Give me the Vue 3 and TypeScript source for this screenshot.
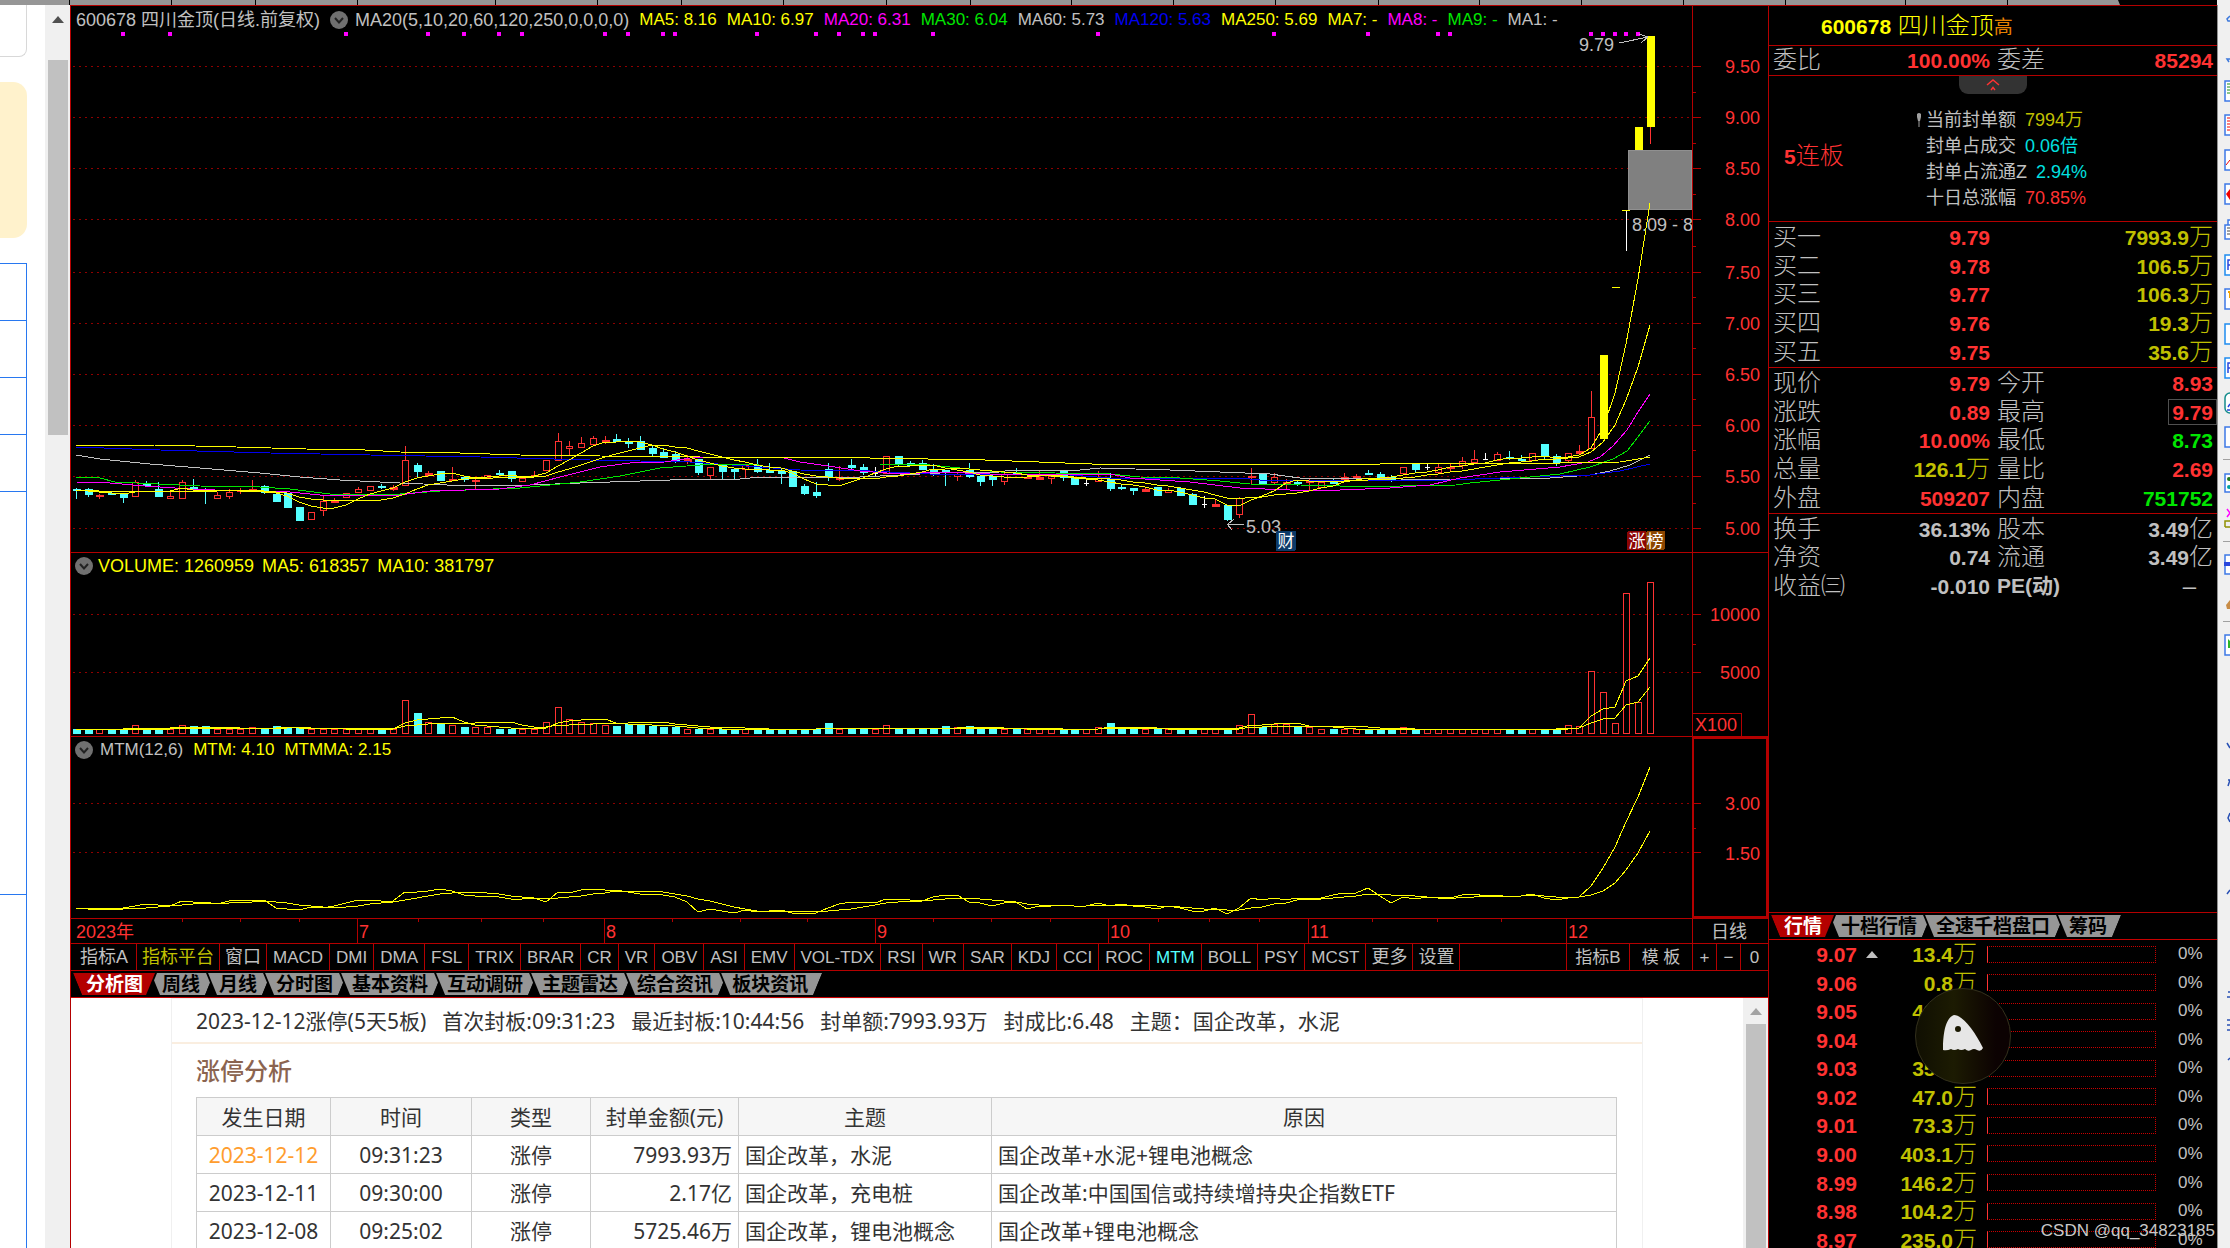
<script setup lang="ts">
type Kind = 'r' | 'c' | 'w' | 'y'
// [kind, high, body top, body bottom, low] in chart pixels
type Candle = [Kind, number, number, number, number]

const X0 = 76
const STEP = 11.745
const xs = (i: number): number => Math.round(X0 + i * STEP)

const candles: Candle[] = [
  ['c', 488, 489, 490, 499], ['c', 488, 489, 494, 497], ['r', 494, 495, 496, 499], ['c', 491, 493, 494, 495],
  ['c', 493, 494, 497, 503], ['r', 480, 482, 497, 497], ['c', 481, 483, 485, 487], ['c', 482, 489, 496, 496],
  ['r', 491, 496, 499, 499], ['r', 480, 482, 499, 499], ['c', 479, 487, 489, 489], ['c', 488, 489, 490, 504],
  ['r', 492, 495, 499, 499], ['r', 489, 492, 497, 499], ['r', 488, 490, 491, 494], ['r', 480, 489, 491, 491],
  ['c', 485, 486, 492, 494], ['c', 492, 494, 501, 501], ['c', 493, 493, 507, 507], ['c', 507, 507, 520, 520],
  ['r', 512, 512, 520, 520], ['r', 495, 501, 511, 516], ['r', 498, 500, 502, 502], ['r', 493, 493, 498, 498],
  ['r', 487, 489, 493, 493], ['r', 486, 486, 491, 491], ['c', 484, 486, 487, 489], ['r', 485, 487, 489, 491],
  ['r', 446, 460, 486, 486], ['c', 463, 465, 471, 477], ['r', 471, 473, 475, 475], ['c', 471, 471, 480, 481],
  ['r', 467, 479, 480, 480], ['c', 476, 477, 479, 482], ['r', 479, 480, 481, 489], ['r', 475, 475, 478, 478],
  ['c', 470, 473, 474, 476], ['c', 471, 471, 478, 482], ['r', 478, 478, 482, 482], ['r', 471, 475, 476, 476],
  ['r', 460, 460, 471, 471], ['r', 433, 441, 461, 461], ['r', 441, 446, 449, 455], ['r', 437, 443, 448, 448],
  ['r', 436, 438, 445, 445], ['r', 436, 440, 441, 444], ['c', 434, 439, 441, 441], ['c', 438, 442, 443, 448],
  ['c', 436, 441, 449, 449], ['c', 446, 448, 453, 457], ['c', 448, 452, 457, 457], ['c', 451, 454, 460, 463],
  ['r', 455, 459, 461, 464], ['c', 459, 459, 472, 475], ['r', 467, 467, 476, 479], ['c', 465, 465, 471, 479],
  ['c', 468, 469, 471, 479], ['r', 465, 465, 470, 479], ['c', 459, 465, 471, 473], ['c', 463, 470, 472, 472],
  ['c', 468, 471, 473, 484], ['c', 471, 471, 486, 486], ['c', 484, 486, 493, 495], ['c', 482, 492, 495, 498],
  ['c', 463, 469, 477, 481], ['r', 466, 478, 479, 481], ['c', 459, 465, 467, 469], ['c', 464, 467, 472, 475],
  ['w', 467, 473, 474, 476], ['r', 456, 456, 474, 474], ['c', 456, 456, 463, 466], ['c', 461, 463, 465, 465],
  ['c', 460, 463, 469, 469], ['c', 464, 469, 471, 476], ['c', 470, 470, 471, 486], ['r', 473, 474, 477, 481],
  ['c', 463, 470, 476, 478], ['c', 476, 476, 481, 486], ['c', 475, 476, 479, 486], ['r', 473, 474, 482, 485],
  ['c', 468, 472, 473, 475], ['r', 476, 477, 478, 479], ['r', 471, 477, 479, 479], ['r', 476, 476, 479, 484],
  ['c', 471, 471, 477, 481], ['c', 478, 478, 484, 484], ['w', 479, 483, 484, 486], ['r', 471, 478, 482, 482],
  ['c', 473, 478, 488, 491], ['c', 484, 487, 488, 490], ['c', 488, 488, 490, 495], ['r', 487, 489, 491, 491],
  ['c', 487, 487, 495, 495], ['r', 488, 490, 493, 493], ['c', 487, 488, 495, 496], ['c', 493, 494, 504, 505],
  ['w', 496, 504, 505, 508], ['r', 500, 504, 506, 506], ['c', 505, 505, 519, 521], ['r', 497, 498, 515, 518],
  ['r', 468, 476, 477, 484], ['c', 473, 474, 483, 484], ['r', 473, 477, 483, 484], ['r', 479, 482, 483, 489],
  ['c', 480, 482, 483, 486], ['r', 478, 480, 482, 491], ['r', 481, 482, 488, 488], ['c', 479, 482, 483, 484],
  ['r', 473, 477, 479, 480], ['r', 474, 476, 477, 479], ['c', 470, 473, 474, 475], ['c', 472, 474, 478, 478],
  ['c', 475, 477, 479, 482], ['r', 467, 467, 474, 474], ['c', 463, 463, 469, 472], ['w', 463, 467, 468, 470],
  ['r', 463, 467, 473, 473], ['r', 463, 467, 468, 471], ['r', 457, 461, 466, 469], ['r', 450, 459, 463, 463],
  ['w', 453, 459, 460, 460], ['r', 452, 454, 461, 461], ['c', 451, 457, 458, 460], ['c', 455, 459, 460, 462],
  ['r', 453, 453, 461, 461], ['c', 444, 444, 456, 459], ['c', 454, 456, 462, 466], ['r', 453, 453, 461, 463],
  ['r', 445, 451, 453, 455], ['r', 391, 417, 449, 449], ['y', 355, 355, 438, 438], ['y', 287, 287, 287, 287],
  ['w', 210, 210, 211, 251], ['y', 127, 127, 150, 150], ['y', 36, 36, 126, 144],
]

const volTops: Record<number, number> = {
  5: 725, 9: 725, 10: 726, 11: 726, 15: 727, 17: 726, 18: 727, 19: 727, 28: 700, 29: 713, 30: 722, 31: 724, 32: 725,
  33: 727, 34: 727, 35: 727, 40: 722, 41: 707, 42: 719, 43: 722, 44: 723, 45: 725, 46: 726, 47: 724, 48: 724, 49: 726,
  50: 727, 51: 727, 64: 723, 69: 725, 74: 726, 75: 727, 76: 726, 87: 727, 88: 723, 99: 725, 100: 714, 101: 727,
  102: 724, 103: 724, 104: 727, 105: 727, 113: 727, 127: 725, 128: 726, 129: 671, 130: 692, 131: 723, 132: 593,
  133: 702, 134: 582,
}
const volumes = candles.map((_, i) => volTops[i] ?? 729)

const close = candles.map(([k, , t, b]) => (k === 'c' ? b : t))

function average(src: number[], n: number): number[] {
  return src.map((_, i) => {
    let sum = 0
    for (let j = 0; j < n; j++) sum += src[Math.max(0, i - j)]
    return sum / n
  })
}
function toLine(ys: number[]): string {
  return ys.map((y, i) => `${xs(i)},${Math.round(y)}`).join(' ')
}

const mtmHead = [908, 909, 909, 909, 908, 906, 904, 905, 906, 901, 902, 902]
const mtm = close.map((c, i) => (i < 12 ? mtmHead[i] : 902 - (close[i - 12] - c) * 0.32))

const priceLines = [
  { color: '#c0c0c0', points: '76,455 100,459 150,464 200,468 260,473 300,477 340,480 400,483 470,486 530,485 580,483 640,481 700,479 740,479 760,477 860,477 940,473 1000,472 1010,470 1080,470 1100,468 1170,470 1220,472 1270,474 1300,478 1350,478 1400,479 1450,480 1500,478 1550,478 1590,475 1610,471 1630,465 1650,455' },
  { color: '#0000f0', points: '76,447 160,450 270,453 370,455 480,457 590,460 690,462 760,467 800,470 870,471 930,474 980,474 1070,475 1110,478 1240,478 1260,480 1350,480 1450,480 1500,478 1590,475 1620,471 1650,464' },
  { color: '#00e600', points: '76,477 100,478 115,482 200,486 260,487 290,489 330,494 400,494 440,491 520,488 580,482 620,476 660,468 700,465 760,464 880,464 920,464 950,467 1000,472 1110,474 1140,477 1180,478 1220,481 1250,484 1300,485 1340,486 1400,486 1456,485 1470,483 1510,479 1560,474 1590,467 1613,459 1627,451 1638,437 1650,421' },
  { color: '#ff00ff', points: '76,482 110,483 145,486 190,489 240,491 290,492 330,496 400,495 430,491 500,489 530,485 560,477 600,467 630,463 665,462 690,458 740,457 780,457 800,462 835,467 860,471 900,474 940,472 990,474 1030,474 1110,474 1130,478 1190,482 1240,488 1290,490 1340,490 1390,488 1430,485 1460,478 1500,472 1560,467 1588,462 1600,457 1613,446 1627,430 1638,412 1650,394' },
  { color: '#ffff00', points: '76,445 154,445 236,447 306,449 365,450 400,452 460,453 520,455 600,456 700,457 870,458 985,460 1092,464 1380,464 1400,463 1560,463 1620,462 1650,457' },
  { color: '#ffff00', points: toLine(average(close, 10)) },
  { color: '#ffff00', points: toLine(average(close, 5)) },
]
const volumeLines = [toLine(average(volumes, 5)), toLine(average(volumes, 10))]
const mtmLines = [toLine(mtm), toLine(average(mtm, 6))]

const markers = [4, 8, 23, 30, 33, 36, 38, 45, 47, 50, 51, 58, 63, 65, 67, 68, 73, 87, 102, 110, 116, 117, 129, 130, 131, 132, 133]

const priceTicks = [
  { y: 66, t: '9.50' }, { y: 117, t: '9.00' }, { y: 168, t: '8.50' }, { y: 219, t: '8.00' }, { y: 272, t: '7.50' },
  { y: 323, t: '7.00' }, { y: 374, t: '6.50' }, { y: 425, t: '6.00' }, { y: 476, t: '5.50' }, { y: 528, t: '5.00' },
]
const priceMinor = [92, 143, 194, 246, 297, 348, 399, 450, 503]

const stroke: Record<Kind, string> = { r: '#ff3232', c: '#54ffff', w: '#fff', y: '#ffff00' }

const legend = [
  { t: 'MA5: 8.16', c: 'yellow' }, { t: 'MA10: 6.97', c: 'yellow' }, { t: 'MA20: 6.31', c: 'magenta' },
  { t: 'MA30: 6.04', c: 'green' }, { t: 'MA60: 5.73', c: 'silver' }, { t: 'MA120: 5.63', c: 'blue' },
  { t: 'MA250: 5.69', c: 'yellow' }, { t: 'MA7: -', c: 'yellow' }, { t: 'MA8: -', c: 'magenta' },
  { t: 'MA9: -', c: 'green' }, { t: 'MA1: -', c: 'silver' },
]

const months = [
  { x: 357, t: '7' }, { x: 604, t: '8' }, { x: 875, t: '9' }, { x: 1108, t: '10' }, { x: 1308, t: '11' }, { x: 1566, t: '12' },
]
const weekTicks = [182, 240, 299, 418, 481, 543, 672, 740, 807, 933, 991, 1050, 1158, 1209, 1259, 1372, 1437, 1501]

const indicators = ['指标A', '指标平台', '窗口', 'MACD', 'DMI', 'DMA', 'FSL', 'TRIX', 'BRAR', 'CR', 'VR', 'OBV', 'ASI', 'EMV', 'VOL-TDX', 'RSI', 'WR', 'SAR', 'KDJ', 'CCI', 'ROC', 'MTM', 'BOLL', 'PSY', 'MCST', '更多', '设置']
const cjkNames = ['指标平台', '窗口', '更多', '设置']
const chartTabs = ['分析图', '周线', '月线', '分时图', '基本资料', '互动调研', '主题雷达', '综合资讯', '板块资讯']
const quoteTabs = ['行情', '十档行情', '全速千档盘口', '筹码']

const summary = ['2023-12-12涨停(5天5板)', '首次封板:09:31:23', '最近封板:10:44:56', '封单额:7993.93万', '封成比:6.48', '主题：国企改革，水泥']
const limitRows = [
  ['2023-12-12', '09:31:23', '涨停', '7993.93万', '国企改革，水泥', '国企改革+水泥+锂电池概念'],
  ['2023-12-11', '09:30:00', '涨停', '2.17亿', '国企改革，充电桩', '国企改革:中国国信或持续增持央企指数ETF'],
  ['2023-12-08', '09:25:02', '涨停', '5725.46万', '国企改革，锂电池概念', '国企改革+锂电池概念'],
]

const bids = [
  ['买一', '9.79', '7993.9', '万'], ['买二', '9.78', '106.5', '万'], ['买三', '9.77', '106.3', '万'],
  ['买四', '9.76', '19.3', '万'], ['买五', '9.75', '35.6', '万'],
]
interface Stat { k: string; v: string; u?: string; c: string; boxed?: boolean }
const stats: Stat[][] = [
  [{ k: '现价', v: '9.79', c: 'red' }, { k: '今开', v: '8.93', c: 'red' }],
  [{ k: '涨跌', v: '0.89', c: 'red' }, { k: '最高', v: '9.79', c: 'red', boxed: true }],
  [{ k: '涨幅', v: '10.00%', c: 'red' }, { k: '最低', v: '8.73', c: 'green' }],
  [{ k: '总量', v: '126.1', u: '万', c: 'olive' }, { k: '量比', v: '2.69', c: 'red' }],
  [{ k: '外盘', v: '509207', c: 'red' }, { k: '内盘', v: '751752', c: 'green' }],
]
const basics: Stat[][] = [
  [{ k: '换手', v: '36.13%', c: 'silver' }, { k: '股本', v: '3.49', u: '亿', c: 'silver' }],
  [{ k: '净资', v: '0.74', c: 'silver' }, { k: '流通', v: '3.49', u: '亿', c: 'silver' }],
  [{ k: '收益㈢', v: '-0.010', c: 'silver' }, { k: 'PE(动)', v: '', u: '–', c: 'silver' }],
]
const sealInfo = [
  { k: '当前封单额', v: '7994万', c: 'olive' }, { k: '封单占成交', v: '0.06倍', c: 'cyan' },
  { k: '封单占流通Z', v: '2.94%', c: 'cyan' }, { k: '十日总涨幅', v: '70.85%', c: 'red' },
]
const depth = [
  ['9.07', '13.4'], ['9.06', '0.8'], ['9.05', '42.6'], ['9.04', '8.1'], ['9.03', '35.0'], ['9.02', '47.0'],
  ['9.01', '73.3'], ['9.00', '403.1'], ['8.99', '146.2'], ['8.98', '104.2'], ['8.97', '235.0'],
]

const stripMarks = [69, 171, 255, 357, 495, 597, 681, 783, 886, 970, 1071, 1173, 1275, 1378, 1479, 1581, 1683, 1785, 1905, 2007]
</script>

<template>
  <div class="app">
    <svg class="strip" viewBox="0 0 2230 5" preserveAspectRatio="xMinYMin slice" aria-hidden="true">
      <rect width="2230" height="5" fill="#000" />
      <path d="M0 0H2118L2120 5H0Z" fill="#969696" />
      <rect v-for="m in stripMarks" :key="m" :x="m" y="0" width="1" height="5" fill="#000" />
      <rect x="2217" width="13" height="5" fill="#f0f0f0" />
    </svg>

    <div class="body">
      <aside class="page-edge">
        <div class="page-cards">
          <div class="card white"></div>
          <div class="card cream"></div>
          <div class="grid-edge">
            <i v-for="n in 4" :key="n" class="cell"></i>
            <i class="cell tall"></i>
            <i class="cell rest"></i>
          </div>
        </div>
        <div class="scroll">
          <svg width="24" height="55" viewBox="0 0 24 55"><path d="M6 18L12 11L18 18Z" fill="#505050" /></svg>
          <div class="thumb"></div>
        </div>
      </aside>

      <main class="chart">
        <section class="panel">
          <header class="legend">
            <span class="silver name">600678 四川金顶(日线.前复权)</span>
            <svg class="drop" viewBox="0 0 18 18"><circle cx="9" cy="9" r="9" fill="#707070" /><path d="M5 7L9 11.500L13 7" fill="none" stroke="#222" stroke-width="2" /></svg>
            <span class="silver formula">MA20(5,10,20,60,120,250,0,0,0,0)</span>
            <span v-for="l in legend" :key="l.t" :class="l.c">{{ l.t }}</span>
          </header>
          <svg class="plot" viewBox="71 6 1697 546" shape-rendering="crispEdges">
            <g v-for="t in priceTicks" :key="t.t">
              <line x1="73" x2="1692" :y1="t.y + 0.5" :y2="t.y + 0.5" class="dots" />
              <line x1="1692" x2="1701" :y1="t.y + 0.5" :y2="t.y + 0.5" class="axis" />
              <text x="1760" :y="t.y + 7" text-anchor="end" class="tick">{{ t.t }}</text>
            </g>
            <line v-for="y in priceMinor" :key="y" x1="1692" x2="1696" :y1="y + 0.5" :y2="y + 0.5" class="axis" />
            <line x1="1692.500" x2="1692.500" y1="6" y2="552" class="axis" />
            <rect v-for="m in markers" :key="m" :x="xs(m) - 2" y="32" width="4" height="4" fill="#ff00ff" />
            <g v-for="(c, i) in candles" :key="i">
              <rect :x="xs(i)" :y="c[1]" width="1" :height="c[4] - c[1]" :fill="i === 134 ? '#ff3232' : stroke[c[0]]" />
              <rect v-if="c[0] === 'w'" :x="xs(i) - 2" :y="c[2]" width="5" height="1" fill="#fff" />
              <rect v-else-if="c[0] === 'r' && c[3] - c[2] > 2" :x="xs(i) - 2.5" :y="c[2] + 0.5" width="6" :height="c[3] - c[2] - 1" fill="#000" :stroke="stroke.r" />
              <rect v-else :x="xs(i) - 3" :y="c[2]" width="8" :height="c[3] - c[2] + 1" :fill="stroke[c[0]]" />
            </g>
            <rect x="1628.500" y="150.500" width="63" height="59" fill="#808080" stroke="#909090" />
            <rect x="1622" y="210" width="8" height="1" fill="#ffff00" />
            <polyline v-for="(l, i) in priceLines" :key="i" :points="l.points" :stroke="l.color" class="curve" />
            <path d="M1227.500 524.500H1244M1227.500 524.500L1234 519M1227.500 524.500L1232 530" class="arrow" />
            <path d="M1619 43L1648 37M1648 37L1639 34M1648 37L1641 43" class="arrow" />
            <text x="1246" y="533" class="note">5.03</text>
            <text x="1579" y="51" class="note">9.79</text>
            <svg x="1630" y="210" width="62" height="26"><text x="2" y="21" class="note">8.09 - 8</text></svg>
            <rect x="1276" y="531" width="20" height="20" rx="2" fill="#0c3a68" />
            <text x="1286" y="547" class="badge">财</text>
            <rect x="1627" y="531" width="19" height="19" rx="2" fill="#8c0404" />
            <text x="1637" y="547" class="badge">涨</text>
            <rect x="1646" y="531" width="19" height="19" rx="2" fill="#8c4600" />
            <text x="1655" y="547" class="badge">榜</text>
          </svg>
        </section>

        <section class="panel">
          <header class="legend low">
            <svg class="drop" viewBox="0 0 18 18"><circle cx="9" cy="9" r="9" fill="#707070" /><path d="M5 7L9 11.500L13 7" fill="none" stroke="#222" stroke-width="2" /></svg>
            <span class="yellow name">VOLUME: 1260959</span>
            <span class="yellow name">MA5: 618357</span>
            <span class="yellow name">MA10: 381797</span>
          </header>
          <svg class="plot" viewBox="71 553 1697 183" shape-rendering="crispEdges">
            <line x1="73" x2="1692" y1="614.500" y2="614.500" class="dots" />
            <line x1="73" x2="1692" y1="672.500" y2="672.500" class="dots" />
            <path d="M1692.500 553V736M1692 614.500H1701M1692 672.500H1701M1692 644.500H1696M1692 713.500H1741.500V736" class="axis" />
            <text x="1760" y="621" text-anchor="end" class="tick">10000</text>
            <text x="1760" y="679" text-anchor="end" class="tick">5000</text>
            <text x="1695" y="731" class="tick">X100</text>
            <g v-for="(v, i) in volumes" :key="i">
              <rect v-if="candles[i][0] === 'c'" :x="xs(i) - 3" :y="v" width="8" :height="734 - v" fill="#54ffff" />
              <rect v-else :x="xs(i) - 2.5" :y="v + 0.5" width="6" :height="733 - v" fill="#000" stroke="#ff3232" />
            </g>
            <polyline v-for="(l, i) in volumeLines" :key="i" :points="l" stroke="#ffff00" class="curve" />
          </svg>
        </section>

        <section class="panel">
          <header class="legend low mtm">
            <svg class="drop" viewBox="0 0 18 18"><circle cx="9" cy="9" r="9" fill="#707070" /><path d="M5 7L9 11.500L13 7" fill="none" stroke="#222" stroke-width="2" /></svg>
            <span class="silver">MTM(12,6)</span>
            <span class="yellow">MTM: 4.10</span>
            <span class="yellow">MTMMA: 2.15</span>
          </header>
          <svg class="plot" viewBox="71 737 1697 181" shape-rendering="crispEdges">
            <line x1="73" x2="1692" y1="803.500" y2="803.500" class="dots" />
            <line x1="73" x2="1692" y1="852.500" y2="852.500" class="dots" />
            <path d="M1692 803.500H1701M1692 852.500H1701M1692 828.500H1696" class="axis" />
            <rect x="1693" y="738" width="74" height="179" class="focus" />
            <text x="1760" y="810" text-anchor="end" class="tick">3.00</text>
            <text x="1760" y="860" text-anchor="end" class="tick">1.50</text>
            <polyline v-for="(l, i) in mtmLines" :key="i" :points="l" stroke="#ffff00" class="curve" />
          </svg>
        </section>

        <section class="panel">
          <svg class="plot" viewBox="71 919 1697 24" shape-rendering="crispEdges">
            <line v-for="w in weekTicks" :key="w" :x1="w + 0.5" :x2="w + 0.5" y1="919" y2="922" class="axis" />
            <text x="76" y="938" class="tick">2023年</text>
            <g v-for="m in months" :key="m.t">
              <line :x1="m.x + 0.5" :x2="m.x + 0.5" y1="919" y2="943" class="axis" />
              <text :x="m.x + 2" y="938" class="tick">{{ m.t }}</text>
            </g>
            <line x1="1692.500" x2="1692.500" y1="919" y2="943" class="axis" />
            <text x="1711" y="938" class="note">日线</text>
          </svg>
        </section>

        <nav class="indicators">
          <button v-for="n in indicators" :key="n" type="button" :class="{ wide: n === '指标A', cjk: cjkNames.includes(n), olive: n === '指标平台', on: n === 'MTM' }">{{ n }}</button>
          <span class="spacer"></span>
          <button type="button" class="end b">指标B</button>
          <button type="button" class="end b">模 板</button>
          <button type="button" class="end s">+</button>
          <button type="button" class="end s">−</button>
          <button type="button" class="end s last">0</button>
        </nav>

        <nav class="tabs">
          <button v-for="(t, i) in chartTabs" :key="t" type="button" :class="{ active: i === 0 }">{{ t }}</button>
        </nav>

        <section class="news">
          <div class="sheet">
            <p class="summary"><span v-for="s in summary" :key="s">{{ s }}</span></p>
            <h2>涨停分析</h2>
            <table class="limits">
              <colgroup><col class="k1" /><col class="k2" /><col class="k3" /><col class="k4" /><col class="k5" /><col /></colgroup>
              <thead>
                <tr><th>发生日期</th><th>时间</th><th>类型</th><th>封单金额(元)</th><th>主题</th><th>原因</th></tr>
              </thead>
              <tbody>
                <tr v-for="r in limitRows" :key="r[0]"><td v-for="(c, j) in r" :key="j">{{ c }}</td></tr>
              </tbody>
            </table>
          </div>
          <div class="scroll">
            <svg width="24" height="26" viewBox="0 0 24 26"><path d="M6 17L12 10L18 17Z" fill="#a3a3a3" /></svg>
            <div class="thumb long"></div>
          </div>
        </section>
      </main>

      <aside class="quote">
        <h1><b>600678</b> 四川金顶<small>高</small></h1>
        <dl class="pairs double single">
          <dt>委比</dt><dd class="red"><b>100.00%</b></dd><dt>委差</dt><dd class="red"><b>85294</b></dd>
        </dl>
        <section class="seal">
          <button type="button" class="handle" aria-label="收起">
            <svg width="16" height="12" viewBox="0 0 16 12"><path d="M2 6L8 1L14 6M6 11L8 8.500L10 11" fill="none" stroke="#ff3232" stroke-width="1.500" /></svg>
          </button>
          <strong class="red"><b>5</b>连板</strong>
          <dl>
            <div v-for="(s, i) in sealInfo" :key="s.k">
              <dt><svg v-if="i === 0" class="pin" viewBox="0 0 6 16"><path d="M1 2Q3 0 5 2V5L4 9H2L1 5Z" fill="#a0a0a0" /><path d="M3 9V15" stroke="#a0a0a0" /></svg>{{ s.k }}</dt>
              <dd :class="s.c">{{ s.v }}</dd>
            </div>
          </dl>
        </section>
        <dl class="pairs five">
          <template v-for="b in bids" :key="b[0]">
            <dt>{{ b[0] }}</dt><dd class="red"><b>{{ b[1] }}</b></dd><dd class="olive across"><b>{{ b[2] }}</b>{{ b[3] }}</dd>
          </template>
        </dl>
        <dl class="pairs double five">
          <template v-for="row in stats" :key="row[0].k">
            <template v-for="s in row" :key="s.k">
              <dt>{{ s.k }}</dt><dd :class="[s.c, { boxed: s.boxed }]"><b>{{ s.v }}</b>{{ s.u }}</dd>
            </template>
          </template>
        </dl>
        <dl class="pairs double three">
          <template v-for="row in basics" :key="row[0].k">
            <template v-for="s in row" :key="s.k">
              <dt :class="{ latin: s.k === 'PE(动)' }">{{ s.k }}</dt><dd :class="[s.c, { none: s.u === '–' }]"><b>{{ s.v }}</b>{{ s.u }}</dd>
            </template>
          </template>
        </dl>
        <div class="filler"></div>
        <nav class="tabs right">
          <button v-for="(t, i) in quoteTabs" :key="t" type="button" :class="{ active: i === 0 }">{{ t }}</button>
        </nav>
        <div class="depth">
          <table>
            <tbody>
              <tr v-for="(d, i) in depth" :key="d[0]">
                <td class="red p"><b>{{ d[0] }}</b></td>
                <td class="up"><svg v-if="i === 0" width="12" height="7" viewBox="0 0 12 7"><path d="M0 7L6 0L12 7Z" fill="#c0c0c0" /></svg></td>
                <td class="olive v"><b>{{ d[1] }}</b>万</td>
                <td class="m"><div class="meter"></div></td>
                <td class="silver pct">0%</td>
              </tr>
            </tbody>
          </table>
          <button type="button" class="bubble" aria-label="助手">
            <svg width="40" height="36" viewBox="0 0 40 36"><path fill-rule="evenodd" d="M0 35C0 20 2 3 11 0C20 0 32 17 40 33Q38 37 34 35Q31 33 28 35Q25 37 22 34Q18 36 15 34Q11 36 8 34Q4 36 0 35ZM15 11A3 3 0 1 0 15 17A3 3 0 1 0 15 11Z" fill="#e6e6e6" /></svg>
          </button>
          <span class="watermark">CSDN @qq_34823185</span>
        </div>
      </aside>

      <aside class="tools">
        <svg width="12" height="1243" viewBox="2218 5 12 1243" fill="none">
          <path d="M2230 16L2227 19L2228 21H2230M2230 59H2227L2229 62" stroke="#3c78dc" stroke-width="1.500" />
          <g fill="#fff" stroke="#3c78e6" stroke-width="1.500">
            <rect x="2225" y="81" width="20" height="20" /><rect x="2225" y="115" width="20" height="20" />
            <rect x="2225" y="150" width="20" height="20" /><rect x="2225" y="184" width="20" height="20" />
            <rect x="2228" y="220" width="20" height="10" /><rect x="2225" y="225" width="20" height="14" />
            <rect x="2225" y="255" width="20" height="20" stroke="#1e8cf0" /><rect x="2225" y="289" width="20" height="20" />
            <rect x="2225" y="324" width="20" height="20" stroke="#1e8cf0" /><rect x="2225" y="358" width="20" height="20" stroke="#1e8cf0" />
            <rect x="2225" y="393" width="20" height="20" rx="5" stroke="#148c8c" /><rect x="2225" y="427" width="20" height="20" />
            <rect x="2225" y="474" width="20" height="18" /><rect x="2225" y="555" width="20" height="19" />
            <rect x="2225" y="635" width="20" height="20" />
          </g>
          <path d="M2227 84H2230M2227 87H2230M2227 90H2230M2227 93H2230" stroke="#148c14" />
          <path d="M2227 118H2230M2227 121H2230M2227 124H2230M2227 127H2230M2227 130H2230M2226 165L2230 160" stroke="#f00000" />
          <path d="M2226 194L2230 189V200Z" fill="#f00000" />
          <path d="M2227 228H2230M2227 231H2230M2227 234H2230" stroke="#444" />
          <path d="M2228 270V260H2230M2228 265H2230M2228 373V363H2230M2228 368H2230M2228 407L2230 404M2227 410H2230" stroke="#2846dc" stroke-width="1.500" />
          <path d="M2228 292H2230V298" stroke="#f0a000" stroke-width="2" />
          <path d="M2223 459.500H2230M2223 541.500H2230M2223 621.500H2230" stroke="#a0a0a0" />
          <circle cx="2229" cy="479" r="2" fill="#207a20" /><circle cx="2229" cy="487" r="2" fill="#00a0a0" />
          <path d="M2227 509L2230 513M2227 517L2230 513" stroke="#ff00ff" stroke-width="1.500" />
          <path d="M2225 527V521H2230M2225 527H2230" stroke="#909000" stroke-width="1.500" />
          <path d="M2224 564H2230" stroke="#2846dc" stroke-width="4" />
          <path d="M2230 600L2226 605L2227 609H2230Z" fill="#c88c46" />
          <path d="M2228 639L2230 641V648H2228Z" fill="#28b428" />
          <path d="M2227 743L2230 748M2228 780H2230L2228 786M2230 813L2228 818L2230 822M2227 894L2230 890M2228 992H2230M2227 997H2230M2227 1020H2230M2227 1025H2230M2227 1030H2230M2228 1060L2230 1058" stroke="#2850b4" stroke-width="1.500" />
        </svg>
      </aside>
    </div>
  </div>
</template>

<style>
body {
  margin: 0;
  overflow: hidden;
  background: #000;
}
</style>

<style scoped>
.app {
  display: flex;
  flex-direction: column;
  height: 100vh;
  background: #000;
  font-family: "Liberation Sans", "Noto Sans CJK SC", sans-serif;
  font-size: 17px;
  color: #c0c0c0;
}
button {
  margin: 0;
  padding: 0;
  border: 0;
  background: none;
  color: inherit;
  font: inherit;
}
dl, dd, p, h1, h2 { margin: 0; }
.strip { display: block; flex: none; width: 100%; height: 5px; }
.body {
  flex: 1;
  display: grid;
  grid-template-columns: 70px minmax(0, 1fr) 449px 13px;
  grid-template-rows: minmax(0, 1fr);
  min-height: 0;
}
.yellow { color: #ffff00; }
.magenta { color: #ff00ff; }
.green { color: #00e600; }
.silver { color: #c0c0c0; }
.blue { color: #0000f0; }
.red { color: #ff3232; }
.olive { color: #c0c000; }
.cyan { color: #00e0e0; }

.page-edge { display: flex; background: #fff; overflow: hidden; }
.page-cards { flex: 1; display: flex; flex-direction: column; padding-right: 18px; }
.card { flex: none; margin-bottom: 25px; }
.white { height: 51px; border: solid #d8d8d8; border-width: 0 1px 1px 0; border-radius: 0 0 8px 0; }
.cream { height: 156px; background: #fff2cc; border-radius: 0 14px 14px 0; }
.grid-edge { flex: 1; display: flex; flex-direction: column; border: solid #2878f0; border-width: 1px 1px 0 0; }
.cell { flex: none; height: 56px; border-bottom: 1px solid #2878f0; }
.cell.tall { height: 402px; }
.cell.rest { flex: 1; border: 0; }
.scroll { flex: none; display: flex; flex-direction: column; align-items: center; width: 25px; background: #f0f0f0; }
.scroll svg { display: block; flex: none; }
.thumb { width: 20px; height: 375px; background: #c1c1c1; }
.thumb.long { flex: 1; height: auto; }

.chart { display: flex; flex-direction: column; min-width: 0; border: solid #b40000; border-width: 1px 0 0 1px; overflow: hidden; }
.panel { position: relative; flex: none; border-bottom: 1px solid #b40000; }
.plot { display: block; width: 100%; height: auto; }
.legend { position: absolute; z-index: 1; top: 4px; left: 5px; display: flex; align-items: center; gap: 10px; height: 20px; line-height: 20px; white-space: nowrap; }
.legend.low { top: 3px; left: 4px; gap: 8px; }
.legend.mtm { gap: 10px; }
.name, .formula { font-size: 18px; }
.drop { width: 18px; height: 18px; margin-right: -3px; }
.dots { stroke: #900000; stroke-width: 1; stroke-dasharray: 2 4; }
.axis { stroke: #b40000; stroke-width: 1; fill: none; }
.focus { stroke: #b40000; stroke-width: 2; fill: none; }
.curve { fill: none; stroke-width: 1; }
.arrow { fill: none; stroke: #c0c0c0; }
.tick { fill: #ff3232; font-size: 18px; }
.note { fill: #c0c0c0; font-size: 18px; }
.badge { fill: #fff; font-size: 17px; text-anchor: middle; }

.indicators { flex: none; display: flex; height: 26px; padding-left: 1px; border-bottom: 1px solid #b40000; }
.indicators button { flex: none; padding: 0 6px; border-right: 1px solid #b40000; line-height: 27px; white-space: nowrap; }
.indicators .wide { padding: 0 8px; font-size: 18px; }
.indicators .cjk { padding: 0 5px; font-size: 18px; }
.indicators .on { color: #54ffff; }
.indicators .olive { color: #c0c000; }
.spacer { flex: 1; }
.indicators .end { padding: 0; text-align: center; border-right: 0; border-left: 1px solid #b40000; }
.indicators .b { width: 63px; }
.indicators .s { width: 24px; }
.indicators .last { width: 28px; }

.tabs { flex: none; display: flex; align-items: center; height: 26px; border-bottom: 1px solid #c80000; }
.tabs button {
  position: relative;
  z-index: 0;
  height: 22px;
  margin-left: -8px;
  padding: 0 14px 0 13px;
  background: #000;
  color: #000;
  font-size: 19px;
  font-weight: 700;
  line-height: 23px;
  clip-path: polygon(0 0, 100% 0, calc(100% - 9px) 100%, 9px 100%);
}
.tabs button::before {
  content: "";
  position: absolute;
  z-index: -1;
  inset: 0;
  background: #969696;
  clip-path: polygon(2px 0, 100% 0, calc(100% - 9px) 100%, 11px 100%);
}
.tabs .active { z-index: 1; margin-left: 2px; color: #fff; }
.tabs .active::before { background: #b40000; clip-path: polygon(0 0, calc(100% - 2px) 0, calc(100% - 11px) 100%, 9px 100%); }
.tabs.right { border-top: 1px solid #b40000; }

.news {
  flex: 1;
  display: flex;
  justify-content: space-between;
  min-height: 0;
  padding-left: 100px;
  background: #fff;
  color: #333;
  font-family: "Noto Sans", "Noto Sans CJK SC", sans-serif;
  font-size: 21px;
}
.sheet { flex: 1; margin-right: 100px; border: solid #f0f0f0; border-width: 1px 1px 0; }
.summary { display: flex; gap: 16px; height: 43px; padding-left: 24px; border-bottom: 2px solid #faeee0; line-height: 44px; white-space: nowrap; }
h2 { padding: 12px 0 11px 24px; color: #8b6450; font-size: 24px; font-weight: 500; line-height: 30px; }
.limits { width: calc(100% - 49px); margin-left: 24px; border-collapse: collapse; table-layout: fixed; }
.k1 { width: 134px; }
.k2 { width: 141px; }
.k3 { width: 119px; }
.k4 { width: 148px; }
.k5 { width: 253px; }
.limits th, .limits td { box-sizing: border-box; height: 38px; padding: 0 6px; border: 1px solid #ccc; font-weight: 400; line-height: 30px; text-align: center; white-space: nowrap; }
.limits th { background: #f6f6f6; }
.limits td:nth-child(4) { text-align: right; }
.limits td:nth-child(n + 5) { text-align: left; }
.limits tr:first-child td:first-child { color: #ff9d2e; }

.quote { display: flex; flex-direction: column; min-width: 0; border: solid #b40000; border-width: 1px 0 0 1px; font-size: 24px; font-weight: 300; overflow: hidden; }
.quote b { font-size: 21px; font-weight: 700; line-height: 20px; }
h1 { flex: none; height: 39px; padding-left: 52px; border-bottom: 1px solid #b40000; color: #ffff00; font-size: 24px; font-weight: 300; line-height: 39px; white-space: nowrap; }
h1 small { color: #e68200; font-size: 19px; font-weight: 400; }
.pairs { flex: none; display: grid; grid-template-columns: 80px 137px 98px 125px; justify-content: start; align-items: center; grid-auto-rows: 1fr; box-sizing: border-box; padding: 1px 0 1px 4px; border-bottom: 1px solid #b40000; line-height: 24px; white-space: nowrap; }
.pairs dd { text-align: right; }
.double dt:nth-of-type(even) { padding-left: 7px; }
.pairs .across { grid-column: span 2; }
.pairs.single { height: 30px; padding: 0 0 1px 4px; }
.pairs.five { height: 146px; }
.pairs.three { height: 87px; border-bottom: 0; }
.pairs .boxed { justify-self: end; width: 41px; margin-right: -4px; padding: 0 3px; border: 1px solid #505050; }
.pairs .none { padding-right: 17px; }
.pairs .latin { font-size: 21px; font-weight: 700; }
.seal { position: relative; flex: none; display: flex; align-items: center; height: 145px; padding-left: 15px; border-bottom: 1px solid #b40000; }
.handle { position: absolute; top: 0; left: 190px; width: 68px; height: 18px; background: #333; border-radius: 0 0 9px 9px; }
.handle svg { display: block; margin: 2px auto; }
.seal strong { width: 142px; margin-top: 10px; font-weight: 300; }
.seal dl { margin-top: 20px; font-size: 18px; font-weight: 400; }
.seal dl div { display: flex; gap: 9px; height: 26px; line-height: 26px; }
.seal dt { position: relative; }
.pin { position: absolute; top: 5px; left: -10px; width: 6px; height: 16px; }
.filler { flex: 1; }

.depth { position: relative; flex: none; height: 308px; overflow: hidden; }
.depth table { width: 100%; height: 314px; border-collapse: collapse; table-layout: fixed; }
.depth td { height: 28px; padding: 0; line-height: 24px; white-space: nowrap; }
.p { width: 88px; text-align: right; }
.up { width: 30px; padding-left: 8px; text-align: center; }
.up svg { display: block; margin: 0 auto; }
.v { width: 90px; text-align: right; }
.m { width: auto; }
.meter { height: 15px; margin: 0 22px 0 10px; border: 1px dotted #c80000; border-left: 1px solid #ff3232; }
.pct { width: 39px; font-size: 17px; font-weight: 400; }
.bubble { position: absolute; top: 48px; left: 146px; width: 96px; height: 96px; border: 1px solid #33301c; border-radius: 50%; background: linear-gradient(90deg, #100f02, #1c1b02 40%, #0c0202 85%); }
.bubble svg { display: block; margin: -6px auto 0; }
.watermark { position: absolute; right: 2px; bottom: 6px; color: #c8c8c8; font-size: 17px; font-weight: 400; line-height: 22px; }

.tools { border-left: 1px solid #909090; background: #f0f0f0; overflow: hidden; }
.tools svg { display: block; }
</style>
